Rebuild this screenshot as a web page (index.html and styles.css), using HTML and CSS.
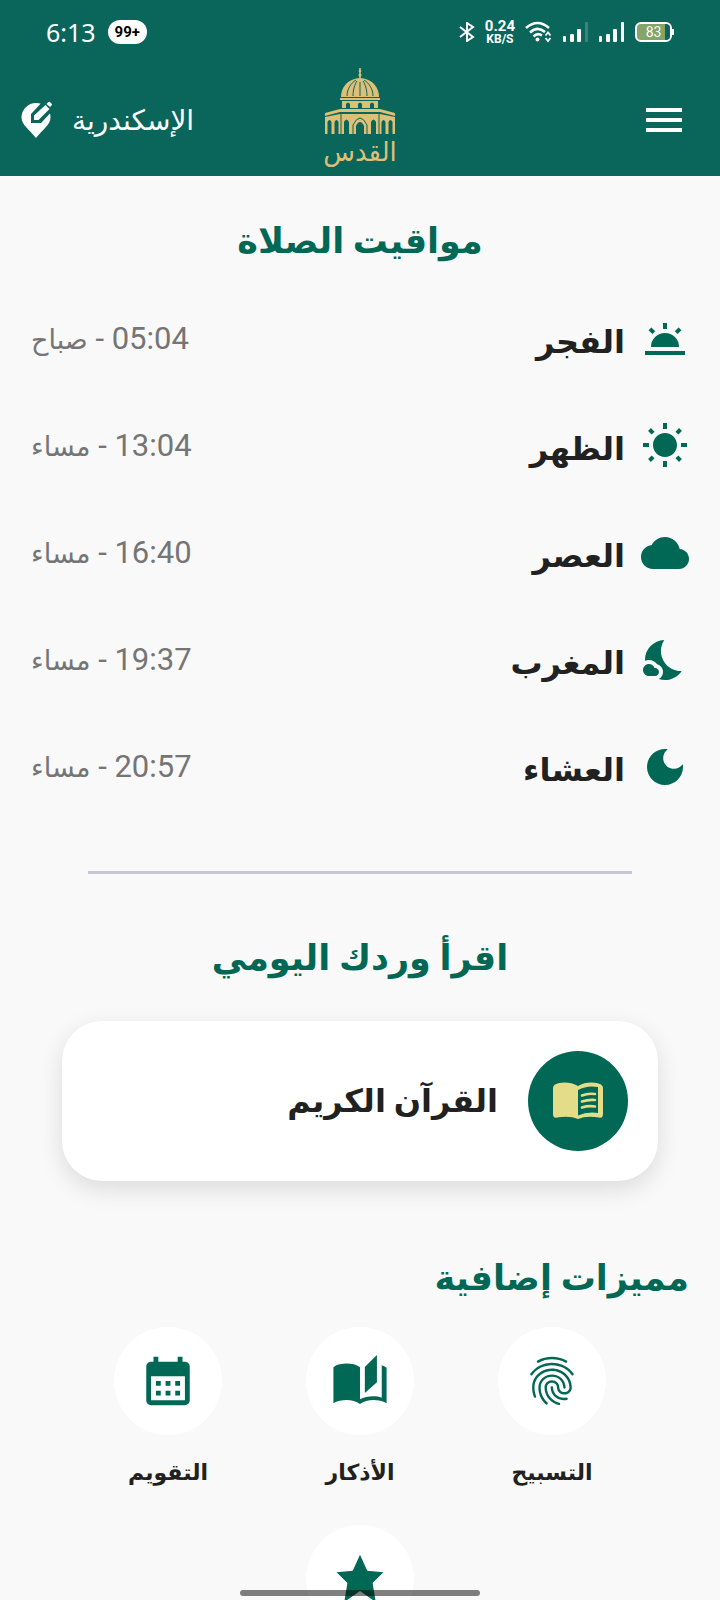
FILE: index.html
```html
<!DOCTYPE html>
<html lang="ar" dir="rtl">
<head>
<meta charset="utf-8">
<meta name="viewport" content="width=device-width, initial-scale=1">
<title>القدس</title>
<link rel="stylesheet" href="styles.css">
</head>
<body>
<div class="app">
  <header class="header">
    <div class="status" dir="ltr">
      <div class="status-group">
        <span class="clock">6:13</span>
        <span class="pill">99+</span>
      </div>
      <div class="status-group status-right">
        <svg class="bluetooth" width="16" height="20" viewBox="0 0 16 20"><path d="M1 5l13 10-6 4V1l6 4L1 15" fill="none" stroke="currentColor" stroke-width="2"/></svg>
        <span class="speed"><b>0.24</b><b class="unit">KB/S</b></span>
        <svg class="wifi" width="28" height="22" viewBox="0 0 28 22"><g fill="none" stroke="currentColor" stroke-width="2.6"><path d="M1 7Q12.500-3 24 7M5 11.500Q12.500 4.500 20 11M8.500 15.500Q12.500 11.500 17 14.500"/></g><circle cx="12.500" cy="18.500" r="2" fill="currentColor"/><path d="M20.500 14.500l2.500-3 2.500 3M20.500 17l2.500 3 2.500-3" fill="none" stroke="currentColor" stroke-width="1.800"/></svg>
        <svg class="signal" width="26" height="20" viewBox="0 0 26 20" fill="currentColor"><rect y="14" width="3" height="6" rx="1"/><rect x="7" y="12" width="4" height="8" rx="1"/><rect x="14" y="7" width="4" height="13" rx="1"/><rect x="22" width="3" height="20" rx="1" opacity=".2"/></svg>
        <svg class="signal" width="26" height="20" viewBox="0 0 26 20" fill="currentColor"><rect y="14" width="3" height="6" rx="1"/><rect x="7" y="12" width="4" height="8" rx="1"/><rect x="14" y="7" width="4" height="13" rx="1"/><rect x="22" width="3" height="20" rx="1"/></svg>
        <span class="battery"><span>83</span></span>
      </div>
    </div>
    <nav class="bar">
      <button class="menu" type="button" aria-label="القائمة"><i></i><i></i><i></i></button>
      <div class="logo">
        <svg width="70" height="67" viewBox="0 0 70 67" fill="#dcc078">
          <path d="M34.200 0h1.600v10h-1.600z"/><circle cx="35" cy="3" r="1.300"/><circle cx="35" cy="7" r="1.500"/>
          <path d="M16 29c0-8 5-18 19-19 14 1 19 11 19 19z"/>
          <path d="M22 28c0-7 4-13 9-16M28 28c0-7 2-12 4-15M35 28V14M42 28c0-7-2-12-4-15M48 28c0-7-4-13-9-16" fill="none" stroke="#0a655b" stroke-width="1"/>
          <path d="M15 30h40v2H15z"/><path d="M17 33h36v7H17z"/>
          <path d="M21 40v-4q2-3 4 0v4zM33 40v-4q2-3 4 0v4zM45 40v-4q2-3 4 0v4z" fill="#0a655b"/>
          <path d="M0 45l15-4h40l15 4v3l-15-4H15L0 48zM0 49l15-3h40l15 3v17H0z"/>
          <path d="M2.500 66V54q2-4 4 0v12zM9.500 66V54q2-4 4 0v12zM19 66V54q2.500-5 5 0v12zM46 66V54q2.500-5 5 0v12zM56.500 66V54q2-4 4 0v12zM63.500 66V54q2-4 4 0v12zM31 66v-8q4-8 8 0v8z" fill="#0a655b"/>
          <path d="M16 46v20M54 46v20M28 66v-9q7-14 14 0v9" fill="none" stroke="#0a655b" stroke-width="1"/>
        </svg>
        <span>القدس</span>
      </div>
      <button class="city" type="button"><span>الإسكندرية</span>
        <svg width="32" height="38" viewBox="0 0 32 38"><path d="M16 37C10 29 1.500 24 1.500 16.500a14.500 14.500 0 0 1 29 0C30.500 24 22 29 16 37z" fill="#fff"/><path d="M11 22v-9L24-1l10 9-13 14z" fill="#0a655b"/><path d="M14 19v-4.500L25.500 4l4 4L18.500 19z" fill="#fff"/><path d="M26.500 3l1.700-1.800q1-1 2 0l1.300 1.300q1 1 0 2L30 6z" fill="#fff"/></svg>
      </button>
    </nav>
  </header>
  <main>
    <h1 class="title">مواقيت الصلاة</h1>
    <ul class="prayers">
      <li><svg class="icon" viewBox="0 0 24 24"><path d="M2 18h20v2H2zM5 16a7 7 0 0 1 14 0zM11 4h2v3h-2zM3.800 7.600l1.400-1.400 1.900 1.900-1.400 1.400zM20.200 7.600l-1.400-1.400-1.900 1.900 1.400 1.400z"/></svg><b>الفجر</b><span class="time">05:04 - <span>صباح</span></span></li>
      <li><svg class="icon" viewBox="0 0 24 24"><path d="M6.760 4.840l-1.800-1.790-1.410 1.410 1.790 1.790 1.420-1.410zM4 10.500H1v2h3v-2zm9-9.950h-2V3.500h2V.55zm7.450 3.910l-1.410-1.410-1.790 1.790 1.410 1.410 1.790-1.790zm-3.210 13.700l1.790 1.800 1.410-1.410-1.800-1.790-1.400 1.400zM20 10.500v2h3v-2h-3zm-8-5c-3.310 0-6 2.690-6 6s2.690 6 6 6 6-2.690 6-6-2.690-6-6-6zm-1 16.950h2V19.500h-2v2.950zm-7.450-3.910l1.410 1.410 1.790-1.800-1.410-1.410-1.790 1.800z"/></svg><b>الظهر</b><span class="time">13:04 - <span>مساء</span></span></li>
      <li><svg class="icon" viewBox="0 0 24 24"><path d="M19.350 10.040C18.670 6.590 15.640 4 12 4 9.110 4 6.600 5.640 5.350 8.040 2.340 8.360 0 10.910 0 14c0 3.310 2.690 6 6 6h13c2.760 0 5-2.240 5-5 0-2.640-2.050-4.780-4.650-4.960z"/></svg><b>العصر</b><span class="time">16:40 - <span>مساء</span></span></li>
      <li><svg class="icon" viewBox="0 0 24 24"><path d="M11.100 12.080C8.770 7.570 10.600 3.600 11.630 2.010 6.270 2.200 1.980 6.590 1.980 12c0 .14.02.28.02.42C2.620 12.150 3.290 12 4 12c1.660 0 3.180.83 4.100 2.150C9.770 14.630 11 16.170 11 18c0 1.520-.87 2.830-2.120 3.510.98.32 2.030.5 3.110.5 3.500 0 6.580-1.800 8.370-4.520C18 17.720 13.380 16.520 11.100 12.080zM7 16h-.18C6.400 14.840 5.300 14 4 14c-1.660 0-3 1.340-3 3s1.340 3 3 3h3c1.100 0 2-.9 2-2s-.9-2-2-2z"/></svg><b>المغرب</b><span class="time">19:37 - <span>مساء</span></span></li>
      <li><svg class="icon" viewBox="0 0 24 24"><path d="M12 3c-4.970 0-9 4.030-9 9s4.030 9 9 9 9-4.030 9-9c0-.46-.04-.92-.1-1.360-.98 1.370-2.580 2.260-4.400 2.260-2.980 0-5.400-2.420-5.400-5.400 0-1.810.89-3.420 2.260-4.400-.44-.06-.9-.1-1.360-.1z"/></svg><b>العشاء</b><span class="time">20:57 - <span>مساء</span></span></li>
    </ul>
    <hr class="divider">
    <h2 class="title daily">اقرأ وردك اليومي</h2>
    <a class="card" href="#quran">
      <span class="disc"><svg width="50" height="38" viewBox="0 0 50 38"><path d="M25 4C18-.5 7-.5 2 2.500Q0 3.500 0 6v26q0 4.500 4 3.500 13-2 21 1.500 8-3.500 21-1.500 4 1 4-3.500V6q0-2.500-2-3.500C43-.5 32-.5 25 4z" fill="#e3dd8a"/><path d="M25 8q9-5 20-3v26q-11-1.500-20 2.500z" fill="#006854"/><path d="M29 13.500q6-2.500 13-1.500M29 19.500q6-2 13-1.500M29 25.500q6-2 13-1" fill="none" stroke="#e3dd8a" stroke-width="2.600" stroke-linecap="round"/></svg></span>
      <span class="card-text">القرآن الكريم</span>
    </a>
    <h2 class="title extra">مميزات إضافية</h2>
    <div class="features">
      <a class="feature" href="#tasbih"><span class="round"><svg viewBox="0 0 24 24"><path d="M17.810 4.470c-.08 0-.16-.02-.23-.06C15.660 3.420 14 3 12.010 3c-1.980 0-3.860.47-5.570 1.410-.24.13-.54.04-.68-.2-.13-.24-.04-.55.2-.68C7.820 2.520 9.860 2 12.010 2c2.130 0 3.990.47 6.030 1.520.25.13.34.43.21.67-.09.18-.26.28-.44.28zM3.500 9.720c-.1 0-.2-.03-.29-.09-.23-.16-.28-.47-.12-.7.99-1.400 2.250-2.500 3.750-3.270C9.980 4.040 14 4.030 17.150 5.650c1.500.77 2.760 1.860 3.750 3.250.16.22.11.54-.12.7-.23.16-.54.11-.7-.12-.9-1.260-2.040-2.250-3.390-2.940-2.870-1.470-6.540-1.470-9.400.01-1.360.7-2.500 1.700-3.400 2.960-.08.14-.23.21-.39.21zm6.250 12.070c-.13 0-.26-.05-.35-.15-.87-.87-1.340-1.430-2.010-2.640-.69-1.230-1.050-2.730-1.050-4.340 0-2.970 2.540-5.390 5.660-5.390s5.660 2.420 5.660 5.390c0 .28-.22.5-.5.5s-.5-.22-.5-.5c0-2.420-2.090-4.390-4.660-4.390-2.570 0-4.660 1.970-4.660 4.390 0 1.440.32 2.770.93 3.850.64 1.150 1.080 1.640 1.850 2.420.19.2.19.51 0 .71-.11.1-.24.15-.37.15zm7.170-1.850c-1.190 0-2.240-.3-3.100-.89-1.490-1.010-2.380-2.650-2.380-4.390 0-.28.22-.5.5-.5s.5.22.5.5c0 1.410.72 2.740 1.940 3.560.71.48 1.540.71 2.540.71.24 0 .64-.03 1.040-.1.27-.05.53.13.58.41.05.27-.13.53-.41.58-.57.11-1.070.12-1.210.12zM14.910 22c-.04 0-.09-.01-.13-.02-1.590-.44-2.630-1.030-3.720-2.100-1.400-1.390-2.170-3.240-2.170-5.220 0-1.620 1.380-2.940 3.080-2.940 1.700 0 3.080 1.320 3.080 2.940 0 1.070.93 1.940 2.080 1.940s2.080-.87 2.080-1.940c0-3.770-3.250-6.830-7.250-6.830-2.840 0-5.440 1.580-6.610 4.030-.39.81-.59 1.760-.59 2.800 0 .78.07 2.010.67 3.610.1.26-.03.55-.29.64-.26.1-.55-.04-.64-.29-.49-1.310-.73-2.610-.73-3.960 0-1.200.23-2.290.68-3.240 1.330-2.790 4.280-4.600 7.510-4.600 4.550 0 8.250 3.510 8.250 7.830 0 1.620-1.380 2.940-3.080 2.940s-3.080-1.320-3.080-2.940c0-1.070-.93-1.940-2.080-1.940s-2.080.87-2.080 1.940c0 1.710.66 3.310 1.870 4.510.95.94 1.860 1.460 3.270 1.850.27.07.42.35.35.61-.05.23-.26.38-.47.38z"/></svg></span><span>التسبيح</span></a>
      <a class="feature" href="#azkar"><span class="round"><svg viewBox="0 0 24 24"><path d="M1 6.300C2.500 5.100 4.500 4.800 6.500 4.800S10.500 5.200 12 6.300V19.600C13.500 18.600 15.500 18.300 17.500 18.300 18.700 18.300 20 18.500 21 18.900V5.500C21.700 5.800 22.400 6.100 23 6.500V21.200C21.500 20.300 19.500 19.900 17.500 19.900 15.500 19.900 13.500 20.400 12 21.500 10.500 20.400 8.500 19.900 6.500 19.900 4.500 19.900 2.500 20.300 1 21.200ZM19 1.200L14 6.200V17l5-4.500Z"/></svg></span><span>الأذكار</span></a>
      <a class="feature" href="#calendar"><span class="round"><svg viewBox="0 0 24 24"><path d="M19 4h-1V2h-2v2H8V2H6v2H5c-1.110 0-1.990.9-1.990 2L3 20c0 1.100.89 2 2 2h14c1.100 0 2-.9 2-2V6c0-1.100-.9-2-2-2zm0 16H5V10h14v10zM9 14H7v-2h2v2zm4 0h-2v-2h2v2zm4 0h-2v-2h2v2zm-8 4H7v-2h2v2zm4 0h-2v-2h2v2zm4 0h-2v-2h2v2z"/></svg></span><span>التقويم</span></a>
      <a class="feature" href="#favorites" aria-label="المفضلة"><span class="round"><svg viewBox="0 0 24 24"><path d="M12 2l3 6.600 6.700.6-4.500 4.500L18.500 21.500 12 17 5.500 21.500 6.800 13.700 2.300 9.200 9 8.600z"/></svg></span></a>
    </div>
  </main>
  <div class="gesture"></div>
</div>
</body>
</html>
```
FILE: styles.css
```css
* { box-sizing: border-box; }
body {
  margin: 0;
  background: #f9f9f9;
  color: #212121;
  font-family: Roboto, "DejaVu Sans", sans-serif;
}
button {
  border: 0;
  padding: 0;
  background: none;
  color: inherit;
  font: inherit;
}
a { color: inherit; text-decoration: none; }
svg { display: block; flex: none; }
.app { height: 100vh; overflow: hidden; }
.header { background: #0a655b; color: #fff; }

.status {
  display: flex;
  align-items: center;
  justify-content: space-between;
  height: 64px;
  padding: 0 48px 0 46px;
}
.status-group { display: flex; align-items: center; gap: 12px; }
.status-right { gap: 10px; }
.clock { font: 25px "Noto Sans", sans-serif; }
.pill {
  padding: 0 7px;
  border-radius: 12px;
  background: #fff;
  color: #000;
  font-size: 15px;
  font-weight: 700;
  line-height: 24px;
}
.speed {
  display: flex;
  flex-direction: column;
  align-items: center;
  font: 15px/14px Roboto, sans-serif;
}
.speed b { font-weight: 700; }
.speed .unit { font-size: 12px; line-height: 12px; }
.battery {
  position: relative;
  width: 37px;
  height: 20px;
  border: 2px solid #fff;
  border-radius: 6px;
  background: linear-gradient(90deg, #85a468 85%, transparent 85%);
  font-size: 14px;
  line-height: 16px;
  text-align: center;
}
.battery::after {
  content: "";
  position: absolute;
  top: 5px;
  right: -4px;
  width: 2px;
  height: 6px;
  background: #fff;
}

.bar {
  display: grid;
  grid-template-columns: 1fr auto 1fr;
  align-items: center;
  height: 112px;
  padding: 0 38px 0 20px;
}
.menu {
  display: flex;
  flex-direction: column;
  justify-self: start;
  gap: 6px;
  width: 36px;
}
.menu i { height: 4px; background: #fff; }
.logo {
  display: flex;
  flex-direction: column;
  align-items: center;
  margin-left: 18px;
  padding-bottom: 4px;
  color: #dcc078;
  font-size: 26px;
  line-height: 34px;
}
.city {
  display: flex;
  align-items: center;
  justify-self: end;
  gap: 20px;
  font-size: 28px;
}

.title {
  margin: 0;
  color: #006854;
  font-size: 35px;
  line-height: 56px;
  text-align: center;
}
main { padding-top: 38px; }
.prayers {
  margin: 0;
  padding: 15px 31px 0;
  list-style: none;
}
.prayers li { display: flex; align-items: center; height: 107px; }
.icon { width: 48px; height: 48px; fill: #006854; }
.prayers b { margin-right: 16px; padding-top: 6px; font-size: 32px; }
.time { margin-right: auto; color: #757575; font-size: 31px; }
.time span { font-size: 27px; }
.divider {
  height: 3px;
  margin: 51px 88px 0;
  border: 0;
  background: #c9c5d3;
}
.daily { margin-top: 57px; }
.card {
  display: flex;
  align-items: center;
  gap: 30px;
  margin: 34px 62px 0;
  padding: 30px;
  border-radius: 40px;
  background: #fff;
  box-shadow: 0 8px 24px rgba(0, 0, 0, .12);
  font-size: 32px;
  font-weight: 700;
}
.disc {
  display: grid;
  place-items: center;
  width: 100px;
  height: 100px;
  border-radius: 50%;
  background: #006854;
}
.extra { margin-top: 70px; padding: 0 31px; text-align: right; }
.features {
  display: flex;
  flex-wrap: wrap;
  justify-content: center;
  gap: 30px 84px;
  padding: 20px 31px;
}
.feature {
  display: flex;
  flex-direction: column;
  align-items: center;
  gap: 16px;
  width: 108px;
  font-size: 22px;
  font-weight: 700;
  line-height: 44px;
  white-space: nowrap;
}
.round {
  display: grid;
  place-items: center;
  width: 108px;
  height: 108px;
  border-radius: 50%;
  background: #fff;
}
.round svg { width: 58px; height: 58px; fill: #006854; }
.gesture {
  position: fixed;
  bottom: 4px;
  left: 50%;
  width: 240px;
  height: 6px;
  margin-left: -120px;
  border-radius: 3px;
  background: rgba(0, 0, 0, .5);
}
```
